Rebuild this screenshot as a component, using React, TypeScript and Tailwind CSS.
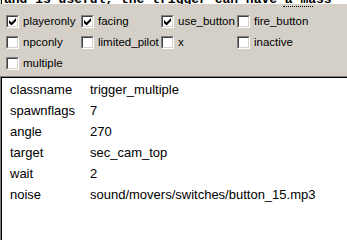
const flags = [
  [
    { label: "playeronly", checked: true },
    { label: "facing", checked: true },
    { label: "use_button", checked: true },
    { label: "fire_button", checked: false },
  ],
  [
    { label: "npconly", checked: false },
    { label: "limited_pilot", checked: false },
    { label: "x", checked: false },
    { label: "inactive", checked: false },
  ],
  [{ label: "multiple", checked: false }],
];

const colWidths = ["w-[75px]", "w-[80px]", "w-[76px]", "w-[100px]"];

const props = [
  ["classname", "trigger_multiple"],
  ["spawnflags", "7"],
  ["angle", "270"],
  ["target", "sec_cam_top"],
  ["wait", "2"],
  ["noise", "sound/movers/switches/button_15.mp3"],
];

function CheckBox({ checked }: { checked: boolean }) {
  return (
    <div className="w-[13px] h-[13px] shrink-0 border-t border-l border-t-[#808080] border-l-[#808080] border-b border-r border-b-white border-r-white">
      <div className="w-full h-full bg-white border-t border-l border-t-[#404040] border-l-[#404040] border-b border-r border-b-[#d4d0c8] border-r-[#d4d0c8] flex items-center justify-center">
        {checked && (
          <svg width="7" height="7" viewBox="0 0 7 7">
            <path d="M0 2v3l2 2h1l4-4V0L2.5 4.5z" fill="#000" />
          </svg>
        )}
      </div>
    </div>
  );
}

export default function App() {
  return (
    <div className="w-[347px] h-[240px] overflow-hidden bg-[#d4d0c8] font-['Liberation_Sans',Arial,sans-serif]">
      {/* clipped text strip above */}
      <div className="relative h-[4px] ml-[1px] bg-white border-l border-black overflow-hidden">
        <div className="absolute left-[2px] bottom-[-2px] whitespace-nowrap font-['Liberation_Mono',monospace] text-[13px] font-bold leading-[13px] text-black">
          and  is useful, the trigger can have a mass
        </div>
      </div>
      <div className="h-[11px] relative">
        <div className="absolute left-[283px] top-[2px] w-[30px] border-t border-dotted border-black" />
      </div>

      <div className="flex flex-col gap-[8px] pl-[6px] text-[11.5px] text-black">
        {flags.map((row, i) => (
          <div key={i} className="flex h-[13px] items-center">
            {row.map((f, j) => (
              <div key={f.label} className={`${colWidths[j]} flex items-center gap-[4px]`}>
                <CheckBox checked={f.checked} />
                <span className="leading-[13px] whitespace-nowrap">{f.label}</span>
              </div>
            ))}
          </div>
        ))}
      </div>

      <div className="mt-[6px] border-t border-l border-t-[#808080] border-l-[#808080] h-[200px]">
        <div className="h-full bg-white border-t border-l border-black pt-[1px] text-[13px] text-black">
          {props.map(([k, v]) => (
            <div key={k} className="flex h-[21px] items-center pl-[8px]">
              <span className="w-[80px] whitespace-nowrap">{k}</span>
              <span className="whitespace-nowrap">{v}</span>
            </div>
          ))}
        </div>
      </div>
    </div>
  );
}
